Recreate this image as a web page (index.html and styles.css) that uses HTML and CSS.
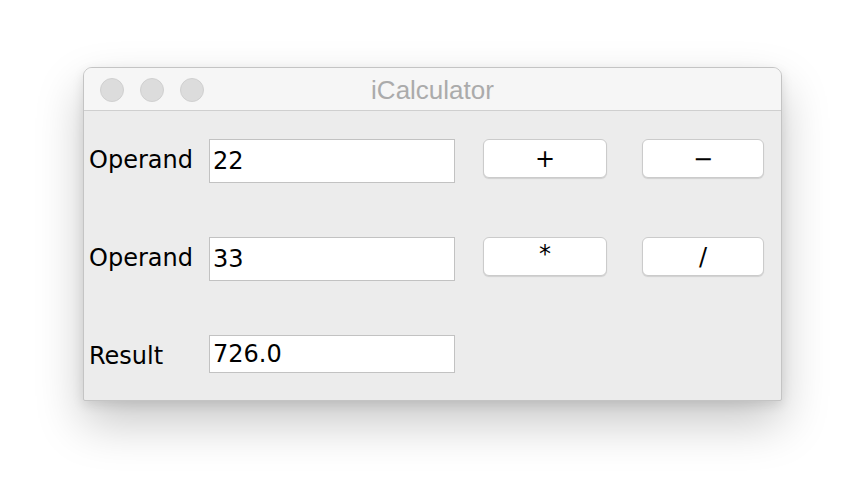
FILE: index.html
```html
<!DOCTYPE html>
<html>
<head>
<meta charset="utf-8">
<link rel="stylesheet" href="styles.css">
</head>
<body>
<div class="window">
  <div class="titlebar">
    <div class="lights">
      <span class="light"></span>
      <span class="light"></span>
      <span class="light"></span>
    </div>
    <div class="title">iCalculator</div>
  </div>
  <div class="content">
    <div class="row">
      <div class="label">Operand</div>
      <div class="field">22</div>
      <div class="btn btn-a">+</div>
      <div class="btn btn-b">−</div>
    </div>
    <div class="row">
      <div class="label">Operand</div>
      <div class="field">33</div>
      <div class="btn btn-a"><span class="star">*</span></div>
      <div class="btn btn-b">/</div>
    </div>
    <div class="row row-last">
      <div class="label">Result</div>
      <div class="field field-short">726.0</div>
    </div>
  </div>
</div>
</body>
</html>
```

FILE: styles.css
```css
html, body {
  margin: 0;
  padding: 0;
  background: #ffffff;
}
body {
  width: 866px;
  height: 500px;
  overflow: hidden;
  padding: 67px 0 0 83px;
  box-sizing: border-box;
}
.window {
  width: 699px;
  height: 334px;
  box-sizing: border-box;
  background: #ececec;
  border: 1px solid #c4c4c4;
  border-radius: 9px 9px 2px 2px;
  box-shadow: 0 22px 48px rgba(0,0,0,0.22), 0 4px 12px rgba(0,0,0,0.10);
  overflow: hidden;
}
.titlebar {
  position: relative;
  height: 42px;
  background: #f6f6f6;
  border-bottom: 1px solid #cfcfcf;
  display: flex;
  align-items: center;
  justify-content: center;
}
.lights {
  position: absolute;
  left: 16px;
  top: 10px;
  display: flex;
  gap: 16px;
}
.light {
  width: 22px;
  height: 22px;
  border-radius: 50%;
  background: #dcdcdc;
  border: 1px solid #d0d0d0;
}
.title {
  font-family: "Liberation Sans", Arial, sans-serif;
  font-size: 26px;
  color: #ababab;
  margin-top: 2px;
}
.content {
  padding: 28px 0 0 5px;
  font-family: "DejaVu Sans", sans-serif;
  font-size: 24px;
  color: #000;
}
.row {
  display: flex;
  align-items: flex-start;
  height: 44px;
  margin-bottom: 54px;
}
.label {
  width: 120px;
  height: 44px;
  line-height: 42px;
}
.field {
  width: 246px;
  height: 44px;
  box-sizing: border-box;
  background: #fff;
  border: 1px solid #c2c2c2;
  padding-left: 3px;
  line-height: 42px;
}
.field-short {
  height: 38px;
  line-height: 36px;
}
.btn {
  height: 39px;
  box-sizing: border-box;
  background: #fff;
  border: 1px solid #cbcbcb;
  border-radius: 6px;
  box-shadow: 0 1px 1px rgba(0,0,0,0.12);
  display: flex;
  align-items: center;
  justify-content: center;
  font-size: 24px;
}
.btn-a {
  width: 124px;
  margin-left: 28px;
}
.btn-b {
  width: 122px;
  margin-left: 35px;
}
.star {
  margin-top: -6px;
}
```
